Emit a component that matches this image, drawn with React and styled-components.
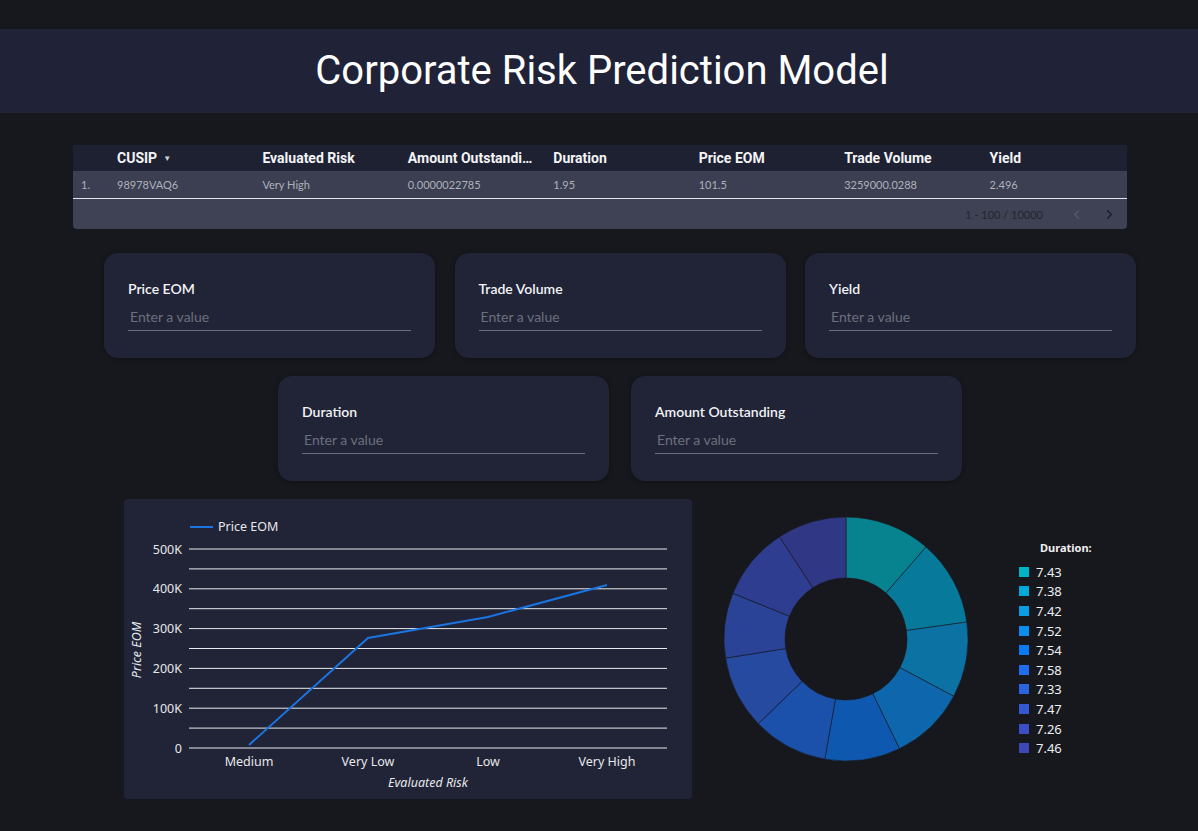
import React from "react";
import styled, { createGlobalStyle } from "styled-components";
import { ChevronLeft, ChevronRight } from "lucide-react";

const GlobalStyle = createGlobalStyle`
  body {
    margin: 0;
    background: #17181d;
    font-family: "Roboto", "Liberation Sans", sans-serif;
  }
`;

// Estilos
const Page = styled.div`
  padding-top: 29px;
  min-height: 831px;
  box-sizing: border-box;
`;

const TitleBand = styled.header`
  height: 84px;
  background: #202337;
  display: flex;
  align-items: center;
  justify-content: center;
`;

const Title = styled.h1`
  margin: 0;
  font-family: "Roboto", sans-serif;
  font-weight: 400;
  font-size: 40px;
  color: #ffffff;
  padding: 0 0 2px 6px;
`;

const Table = styled.section`
  margin: 32px 0 0 73px;
  width: 1054px;
  border-radius: 0 0 4px 4px;
  overflow: hidden;
`;

const Row = styled.div`
  display: grid;
  grid-template-columns: 36px repeat(7, 1fr);
  height: ${(p) => (p.$head ? "26px" : "27px")};
  align-items: center;
  background: ${(p) => (p.$head ? "#1e2132" : "#3b3f51")};
  border-bottom: ${(p) => (p.$head ? "none" : "1.5px solid #e4e5ea")};
`;

const HeadCell = styled.div`
  padding: 0 10px 0 8px;
  font-family: "Roboto", sans-serif;
  font-weight: 700;
  font-size: 14px;
  color: #f4f4f6;
  white-space: nowrap;
  overflow: hidden;
  text-overflow: ellipsis;
`;

const Caret = styled.span`
  font-size: 8px;
  color: #d0d2d8;
  margin-left: 6px;
  vertical-align: 2px;
`;

const Cell = styled.div`
  padding: 0 10px 0 8px;
  font-family: "Lato", sans-serif;
  font-size: 11px;
  color: #aeb1bc;
  white-space: nowrap;
  overflow: hidden;
  text-overflow: ellipsis;
`;

const Footer = styled.div`
  height: 30px;
  background: #3e4254;
  display: flex;
  align-items: center;
  justify-content: flex-end;
  padding-right: 10px;
  gap: 18px;
`;

const PageInfo = styled.span`
  font-family: "Lato", sans-serif;
  font-size: 11px;
  color: #24262e;
  margin-right: 8px;
`;

const PageBtn = styled.span`
  display: flex;
  color: ${(p) => (p.$off ? "#565a6a" : "#1c1e25")};
`;

const Inputs = styled.section`
  margin: 24px 0 0 104px;
  width: 1032px;
  display: flex;
  flex-direction: column;
  gap: 18px;
`;

const InputRow = styled.div`
  display: flex;
  justify-content: ${(p) => (p.$center ? "center" : "space-between")};
  gap: ${(p) => (p.$center ? "22px" : "0")};
`;

const InputCard = styled.div`
  flex: 0 0 331px;
  height: 105px;
  box-sizing: border-box;
  padding: 27px 24px 0;
  background: #212436;
  border-radius: 14px;
  box-shadow: 0 1px 4px rgba(0, 0, 0, 0.35);
`;

const Label = styled.label`
  display: block;
  font-family: "Lato", sans-serif;
  font-weight: 600;
  font-size: 14px;
  line-height: 18px;
  color: #f2f3f6;
`;

const Field = styled.input`
  display: block;
  width: 100%;
  box-sizing: border-box;
  margin-top: 5px;
  height: 28px;
  padding: 0 2px;
  background: transparent;
  border: none;
  border-bottom: 1px solid #6b6e7e;
  outline: none;
  font-family: "Lato", sans-serif;
  font-size: 14px;
  color: #e0e0e0;
  &::placeholder {
    color: #6c6f7e;
  }
`;

const Charts = styled.section`
  margin: 18px 0 0 124px;
  display: flex;
  align-items: flex-start;
`;

const ChartCard = styled.div`
  width: 568px;
  height: 300px;
  background: #212436;
  border-radius: 4px;
`;

const ChartText = styled.text`
  font-family: "Noto Sans", "DejaVu Sans", sans-serif;
  font-size: ${(p) => p.$size || 12}px;
  font-style: ${(p) => (p.$italic ? "italic" : "normal")};
  fill: #e6e7eb;
`;

const PieBox = styled.div`
  margin: 15px 0 0 29px;
  display: flex;
  align-items: flex-start;
`;

const Legend = styled.div`
  margin: 26px 0 0 48px;
  font-family: "Noto Sans", "DejaVu Sans", sans-serif;
`;

const LegendTitle = styled.div`
  padding-left: 21px;
  font-size: 11px;
  font-weight: 700;
  color: #f0f0f3;
  margin-bottom: 7px;
`;

const LegendItem = styled.div`
  display: flex;
  align-items: center;
  gap: 7px;
  height: 19.6px;
  font-size: 13px;
  color: #eceef2;
`;

const Swatch = styled.span`
  width: 10px;
  height: 10px;
  background: ${(p) => p.$color};
`;

const columns = ["CUSIP", "Evaluated Risk", "Amount Outstanding", "Duration", "Price EOM", "Trade Volume", "Yield"];
const row = ["98978VAQ6", "Very High", "0.0000022785", "1.95", "101.5", "3259000.0288", "2.496"];

const durations = [
    { label: "7.43", color: "#00b5c6" },
    { label: "7.38", color: "#00aad8" },
    { label: "7.42", color: "#089ee4" },
    { label: "7.52", color: "#0a8ef0" },
    { label: "7.54", color: "#0a79f4" },
    { label: "7.58", color: "#1e6dee" },
    { label: "7.33", color: "#2c63df" },
    { label: "7.47", color: "#3458d2" },
    { label: "7.26", color: "#3a4fc5" },
    { label: "7.46", color: "#3d47b6" },
];

// angulos medidos das fatias
const cuts = [0, 41, 82, 118, 154, 190, 226, 261, 292, 327, 360];

function slicePath(a0, a1, R, r, c) {
    const p = (a, rad) => {
        const t = ((a - 90) * Math.PI) / 180;
        return [c + rad * Math.cos(t), c + rad * Math.sin(t)];
    };
    const large = a1 - a0 > 180 ? 1 : 0;
    const [x0, y0] = p(a0, R);
    const [x1, y1] = p(a1, R);
    const [x2, y2] = p(a1, r);
    const [x3, y3] = p(a0, r);
    return `M${x0},${y0} A${R},${R} 0 ${large} 1 ${x1},${y1} L${x2},${y2} A${r},${r} 0 ${large} 0 ${x3},${y3} Z`;
}

function LineChart() {
    const grid = Array.from({ length: 11 }, (_, i) => 50 + i * 19.9);
    const yTicks = ["500K", "400K", "300K", "200K", "100K", "0"];
    const xTicks = [
        { x: 125, t: "Medium" },
        { x: 244, t: "Very Low" },
        { x: 364, t: "Low" },
        { x: 483, t: "Very High" },
    ];
    return (
        <svg width="568" height="300">
            <line x1="66" y1="28" x2="89" y2="28" stroke="#1a74e2" strokeWidth="2" />
            <ChartText x="94" y="32" $size={12.5}>Price EOM</ChartText>
            {grid.map((y) => (
                <line key={y} x1="65" x2="543" y1={y} y2={y} stroke="#e9eaee" strokeWidth="1" />
            ))}
            {yTicks.map((t, i) => (
                <ChartText key={t} x="58" y={50 + i * 39.8 + 4.5} textAnchor="end" $size={12.5}>{t}</ChartText>
            ))}
            {xTicks.map((d) => (
                <ChartText key={d.t} x={d.x} y="267" textAnchor="middle" $size={12.5}>{d.t}</ChartText>
            ))}
            <ChartText x="304" y="288" textAnchor="middle" $italic $size={12.5}>Evaluated Risk</ChartText>
            <ChartText x="17" y="151" textAnchor="middle" $italic $size={12.5} transform="rotate(-90 17 151)">Price EOM</ChartText>
            <polyline points="125,246 244,139 364,118 483,86" fill="none" stroke="#1a74e2" strokeWidth="2" />
        </svg>
    );
}

function Donut() {
    return (
        <svg width="250" height="250">
            {durations.map((d, i) => (
                <path
                    key={d.label}
                    d={slicePath(cuts[i], cuts[i + 1], 122, 61, 125)}
                    fill={d.color}
                    fillOpacity="0.68"
                    stroke="#17181d"
                    strokeWidth="0.6"
                />
            ))}
        </svg>
    );
}

const fields1 = ["Price EOM", "Trade Volume", "Yield"];
const fields2 = ["Duration", "Amount Outstanding"];

function App() {
    return (
        <>
            <GlobalStyle />
            <Page>
                <TitleBand>
                    <Title>Corporate Risk Prediction Model</Title>
                </TitleBand>

                <Table>
                    <Row $head>
                        <HeadCell />
                        {columns.map((c, i) => (
                            <HeadCell key={c}>
                                {c}
                                {i === 0 && <Caret>▼</Caret>}
                            </HeadCell>
                        ))}
                    </Row>
                    <Row>
                        <Cell>1.</Cell>
                        {row.map((v, i) => (
                            <Cell key={i}>{v}</Cell>
                        ))}
                    </Row>
                    <Footer>
                        <PageInfo>1 - 100 / 10000</PageInfo>
                        <PageBtn $off><ChevronLeft size={15} strokeWidth={2} /></PageBtn>
                        <PageBtn><ChevronRight size={15} strokeWidth={2.2} /></PageBtn>
                    </Footer>
                </Table>

                <Inputs>
                    <InputRow>
                        {fields1.map((f) => (
                            <InputCard key={f}>
                                <Label>{f}</Label>
                                <Field placeholder="Enter a value" />
                            </InputCard>
                        ))}
                    </InputRow>
                    <InputRow $center>
                        {fields2.map((f) => (
                            <InputCard key={f}>
                                <Label>{f}</Label>
                                <Field placeholder="Enter a value" />
                            </InputCard>
                        ))}
                    </InputRow>
                </Inputs>

                <Charts>
                    <ChartCard>
                        <LineChart />
                    </ChartCard>
                    <PieBox>
                        <Donut />
                        <Legend>
                            <LegendTitle>Duration:</LegendTitle>
                            {durations.map((d) => (
                                <LegendItem key={d.label}>
                                    <Swatch $color={d.color} />
                                    {d.label}
                                </LegendItem>
                            ))}
                        </Legend>
                    </PieBox>
                </Charts>
            </Page>
        </>
    );
}

export default App;
